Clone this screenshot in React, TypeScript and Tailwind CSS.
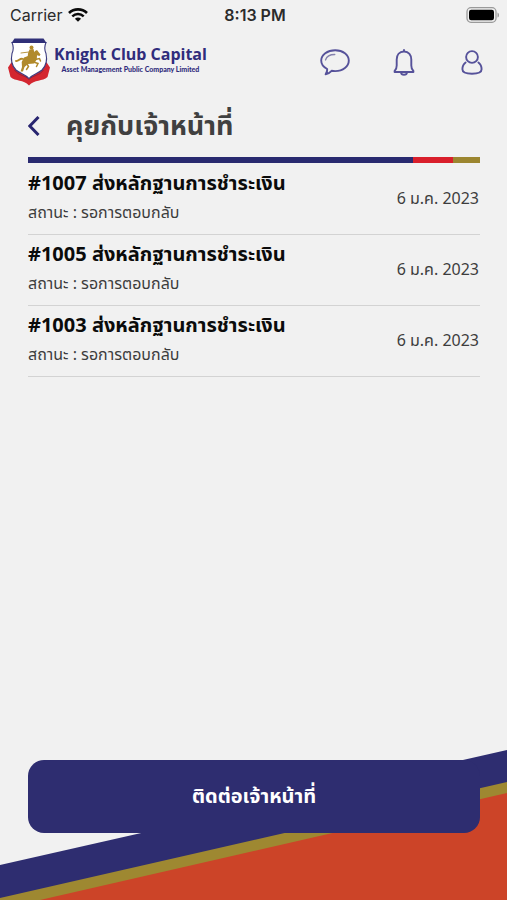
import React from "react";

type Ticket = { id: string; title: string; status: string; date: string };

const tickets: Ticket[] = [
  { id: "#1007", title: "ส่งหลักฐานการชำระเงิน", status: "รอการตอบกลับ", date: "6 ม.ค. 2023" },
  { id: "#1005", title: "ส่งหลักฐานการชำระเงิน", status: "รอการตอบกลับ", date: "6 ม.ค. 2023" },
  { id: "#1003", title: "ส่งหลักฐานการชำระเงิน", status: "รอการตอบกลับ", date: "6 ม.ค. 2023" },
];

function WifiIcon() {
  return (
    <svg width="20" height="14" viewBox="0 0 20 14" fill="none" stroke="#0a0a0a" aria-hidden="true">
      <path d="M1 4.9C6 .2 14 .2 19 4.9" strokeWidth="2.7" />
      <path d="M4.3 8.3c3.2-3 8.2-3 11.4 0" strokeWidth="2.5" />
      <path d="M10 13.8 6.9 10.7c1.7-1.6 4.5-1.6 6.2 0Z" fill="#0a0a0a" stroke="none" />
    </svg>
  );
}

function BatteryIcon() {
  return (
    <svg width="34" height="16" viewBox="0 0 34 16" aria-hidden="true">
      <rect x="1" y="0.7" width="29" height="14.6" rx="4" fill="#f1f1f1" stroke="#9a9a9a" strokeWidth="1.3" />
      <rect x="3" y="2.7" width="25" height="10.6" rx="2.2" fill="#000" />
      <path d="M31.5 5.4c2 .8 2 4.4 0 5.2Z" fill="#9a9a9a" />
    </svg>
  );
}

function Shield() {
  return (
    <svg width="44" height="50" viewBox="0 0 44 50" aria-hidden="true">
      <path d="M5 24.500 1 30.500l2.500 9.500c5 4.500 13 2.500 18.500 8.500 5.500-6 13.500-4 18.500-8.500L43 30.500l-4-6-4 8.500L22 41 9 33Z" fill="#d42630" />
      <path d="M7.500 33c4 6 10.500 5 14.500 9.500 4-4.500 10.500-3.500 14.500-9.500" fill="none" stroke="#9f2032" strokeWidth="1" />
      <path d="M5 5.500c1.800 4 1.800 7 0 11-1.500 7 0 12.500 4 16.500 4 3.500 9 4 13 8.500 4-4.500 9-5 13-8.500 4-4 5.500-9.500 4-16.500-1.800-4-1.800-7 0-11Z" fill="#fff" stroke="#3c3c80" strokeWidth="1.100" />
      <path d="M7.500 1.500h29L39.500 6h-35Z" fill="#303078" />
      <g fill="#b18a2b">
        <circle cx="24.500" cy="10.500" r="2" />
        <path d="M22.500 12.500 26.500 12l1 4-1.500 5-5.500.5.500-5Z" />
        <path d="M25 18.500 28 14l2-1 3.500 4.500-1 1.500-2.500-.8-.2 4.300-2.800 4-6 .5-3.500 3-1.500 4.500h-2.500l1.500-4.500-.3-5L17 20.500l4-1.500Z" />
      </g>
      <g fill="none" stroke="#b18a2b" strokeLinecap="round">
        <path d="M28 22.500l4.500-1 1 2.500M26.500 25l4.500 1.500-1.500 3" strokeWidth="1.500" />
        <path d="M16 22c-3-1.500-4 2.500-7 2" strokeWidth="1.800" />
        <path d="M20 27l1.500 2.500-2 3" strokeWidth="1.500" />
        <path d="m14 16 8-1" strokeWidth=".9" />
      </g>
    </svg>
  );
}

function ChatIcon() {
  return (
    <svg width="30" height="27" viewBox="0 0 30 27" fill="none" stroke="#56529a" strokeWidth="1.900" strokeLinejoin="round" aria-hidden="true">
      <path d="M15.200 1.200C7.300 1.200 1.200 5.700 1.200 11.500c0 3.800 2.500 6.700 6 8.500.2 2-.4 3.600-1.600 5.200 2.400-.5 4.500-1.700 6-3.400 1.100.2 2.300.3 3.600.3 7.800 0 13.600-4.700 13.600-10.600S23 1.200 15.200 1.200Z" />
      <path d="M5.500 11c1-3.200 4.500-5.500 9.300-5.500" strokeWidth="1.300" stroke="#8582ad" strokeLinecap="round" />
    </svg>
  );
}

function BellIcon() {
  return (
    <svg width="22" height="27" viewBox="0 0 22 27" fill="none" stroke="#56529a" strokeWidth="1.900" strokeLinejoin="round" aria-hidden="true">
      <path d="M11 .2v2.300M11 2.500c-4.800 0-7.300 3.500-7.300 8v6c0 2.500-.6 4.200-2.100 5.500v1h18.800v-1c-1.500-1.300-2.100-3-2.100-5.500v-6c0-4.500-2.500-8-7.300-8Z" />
      <path d="M8 23.300c.2 1.800 1.300 2.400 3 2.400s2.800-.6 3-2.400" />
    </svg>
  );
}

function UserIcon() {
  return (
    <svg width="22" height="25" viewBox="0 0 22 25" fill="none" stroke="#56529a" strokeWidth="1.900" strokeLinecap="round" aria-hidden="true">
      <circle cx="11" cy="7" r="5.900" />
      <path d="M4.600 12.500C2.300 14.200 1.400 16.500 1.400 19.300c0 3.300 3.100 4.500 9.600 4.500s9.600-1.200 9.600-4.500c0-2.800-.9-5.100-3.200-6.800" />
    </svg>
  );
}

function StatusBar() {
  return (
    <div className="grid h-[30px] grid-cols-[1fr_auto_1fr] items-center pr-[7px] pl-[10px] font-['Inter','Liberation_Sans',sans-serif] text-base text-[#2b2b2b]">
      <div className="flex items-center gap-[6px]">
        <span>Carrier</span>
        <WifiIcon />
      </div>
      <span className="font-semibold">8:13 PM</span>
      <div className="flex justify-end">
        <BatteryIcon />
      </div>
    </div>
  );
}

function Header() {
  return (
    <header className="flex h-16 items-center justify-between pr-6 pl-[7px]">
      <div className="flex items-center gap-[3px]">
        <Shield />
        <div className="flex flex-col items-center pb-2 whitespace-nowrap text-[#302c7c]">
          <span className="font-['Open_Sans','Noto_Sans',sans-serif] text-base leading-[22px] font-bold">Knight Club Capital</span>
          <span className="font-['Lato',sans-serif] text-[7px] leading-[9px] font-black">Asset Management Public Company Limited</span>
        </div>
      </div>
      <nav className="flex items-center gap-[43px]">
        <button type="button" aria-label="แชท"><ChatIcon /></button>
        <button type="button" aria-label="การแจ้งเตือน"><BellIcon /></button>
        <button type="button" aria-label="บัญชีผู้ใช้" className="pl-[3px]"><UserIcon /></button>
      </nav>
    </header>
  );
}

function TicketRow({ ticket }: { ticket: Ticket }) {
  return (
    <li className="flex items-center justify-between border-b border-[#d3d3d3]">
      <div className="pt-[3px] pb-[9px]">
        <h2 className="text-xl leading-8 font-bold text-[#0b0b0b]">
          {ticket.id} {ticket.title}
        </h2>
        <p className="text-base leading-[26px] text-[#3d3d3d]">สถานะ : {ticket.status}</p>
      </div>
      <time dateTime="2023-01-06" className="pr-px pb-[2px] text-base text-[#3d3d3d]">{ticket.date}</time>
    </li>
  );
}

export default function App() {
  return (
    <div className="flex min-h-screen flex-col bg-[#f1f1f1] font-['Noto_Sans','Noto_Sans_Thai',sans-serif]">
      <StatusBar />
      <Header />
      <main className="flex-1 pr-[27px] pl-7">
        <div className="flex h-[63px] items-center gap-6">
          <button type="button" aria-label="ย้อนกลับ">
            <svg width="14" height="20" viewBox="0 0 14 20" fill="none" stroke="#282570" strokeWidth="3" aria-hidden="true">
              <path d="M10.500 1 1.800 10l8.700 9" />
            </svg>
          </button>
          <h1 className="pb-[2px] text-[27px] leading-10 font-bold text-[#404040]">คุยกับเจ้าหน้าที่</h1>
        </div>
        <div className="flex h-[6px]">
          <div className="flex-1 bg-[#292a70]" />
          <div className="w-10 bg-[#d91f2b]" />
          <div className="w-[27px] bg-[#9c8630]" />
        </div>
        <ul className="pt-px">
          {tickets.map((ticket) => (
            <TicketRow key={ticket.id} ticket={ticket} />
          ))}
        </ul>
      </main>
      <footer className="relative pt-[10px] pr-[27px] pb-[67px] pl-7">
        <svg className="absolute inset-0 h-full w-full" viewBox="0 0 507 150" preserveAspectRatio="none" aria-hidden="true">
          <path d="M0 115 507 0v150H0Z" fill="#2e2d70" />
          <path d="M0 148 507 32v118H0Z" fill="#9e8831" />
          <path d="M40 150 507 43v107Z" fill="#cc4428" />
        </svg>
        <button type="button" className="relative h-[73px] w-full rounded-2xl bg-[#2e2d70] pb-[2px] text-xl font-bold text-white">
          ติดต่อเจ้าหน้าที่
        </button>
      </footer>
    </div>
  );
}
